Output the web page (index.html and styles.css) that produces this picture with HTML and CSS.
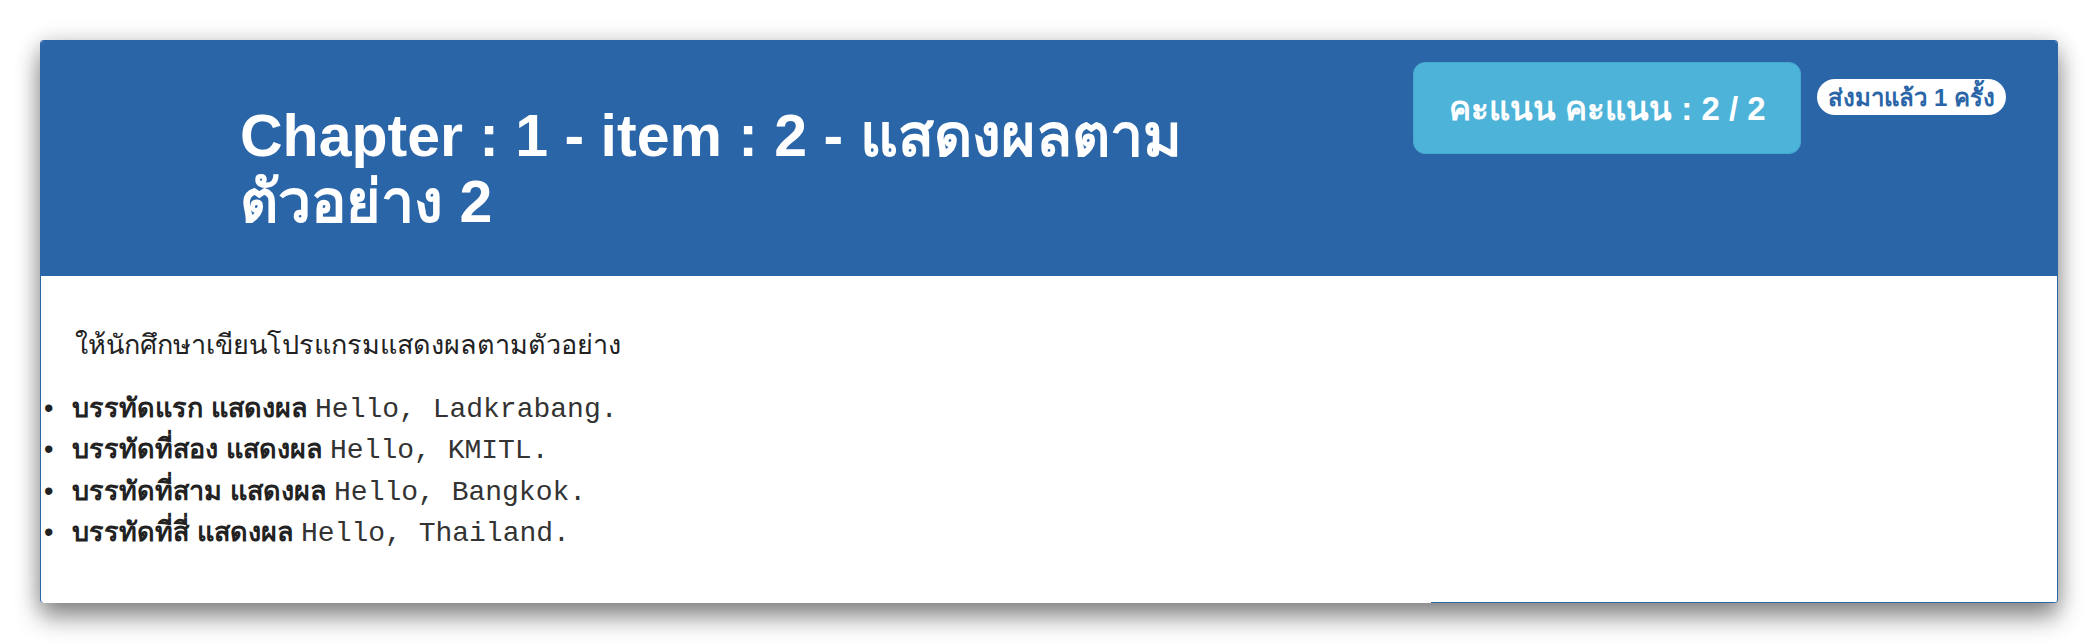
FILE: index.html
```html
<!DOCTYPE html>
<html lang="th">
<head>
<meta charset="utf-8">
<title>Chapter 1 - item 2</title>
<link rel="stylesheet" href="styles.css">
</head>
<body>
<div class="card">
  <div class="card-header">
    <h1 class="title">Chapter : 1 - item : 2 - แสดงผลตาม ตัวอย่าง 2</h1>
    <div class="score">คะแนน คะแนน : 2 / 2</div>
    <span class="sent">ส่งมาแล้ว 1 ครั้ง</span>
  </div>
  <div class="card-body">
    <p class="intro">ให้นักศึกษาเขียนโปรแกรมแสดงผลตามตัวอย่าง</p>
    <ul class="lines">
      <li><b>บรรทัดแรก แสดงผล</b> <code>Hello, Ladkrabang.</code></li>
      <li><b>บรรทัดที่สอง แสดงผล</b> <code>Hello, KMITL.</code></li>
      <li><b>บรรทัดที่สาม แสดงผล</b> <code>Hello, Bangkok.</code></li>
      <li><b>บรรทัดที่สี่ แสดงผล</b> <code>Hello, Thailand.</code></li>
    </ul>
  </div>
</div>
</body>
</html>
```

FILE: styles.css
```css
html, body {
  margin: 0;
  background: #ffffff;
}
body {
  padding: 40px;
  font-family: "Liberation Sans", "Noto Sans", sans-serif;
  color: #2b2b2b;
}
.card {
  position: relative;
  border: 1px solid #2a65a8;
  border-bottom: none;
  border-radius: 4px;
  background: #ffffff;
  box-shadow: 0 14px 24px rgba(0, 0, 0, 0.45), 0 0 22px rgba(0, 0, 0, 0.14);
  overflow: hidden;
}
.card::after {
  content: "";
  position: absolute;
  right: 0;
  bottom: 0;
  width: 626px;
  height: 1px;
  background: #2a65a8;
}
.card-header {
  background: #2a65a8;
  height: 235px;
  display: flex;
  align-items: flex-start;
  padding-right: 51px;
  box-sizing: border-box;
}
.title {
  flex: 1;
  margin: 0;
  padding: 62px 100px 0 199px;
  font-size: 59px;
  line-height: 66px;
  font-weight: bold;
  color: #ffffff;
}
.score {
  margin-top: 21px;
  width: 388px;
  height: 92px;
  box-sizing: border-box;
  display: flex;
  align-items: center;
  justify-content: center;
  background: #4eb3d8;
  border: 1px solid #46a7d0;
  border-radius: 12px;
  color: #ffffff;
  font-size: 33px;
  font-weight: bold;
}
.sent {
  margin-top: 38px;
  margin-left: 16px;
  height: 36px;
  padding: 0 11px;
  display: flex;
  align-items: center;
  background: #ffffff;
  border-radius: 18px;
  color: #2a65a8;
  font-size: 24px;
  font-weight: bold;
}
.card-body {
  padding: 49px 0 50px 0;
}
.intro {
  margin: 0 0 22px 0;
  padding-left: 34px;
  font-size: 27px;
  line-height: 41px;
  font-weight: 500;
  color: #222222;
}
.lines {
  margin: 0;
  padding-left: 31px;
  list-style: none;
  font-size: 27px;
  line-height: 41.3px;
}
.lines li::before {
  content: "\2022";
  display: inline-block;
  width: 28px;
  margin-left: -28px;
  color: #222222;
}
.lines b {
  font-weight: bold;
  color: #222222;
}
.lines code {
  font-family: "Liberation Mono", monospace;
  font-size: 28px;
  line-height: 1;
  color: #333333;
}
```
